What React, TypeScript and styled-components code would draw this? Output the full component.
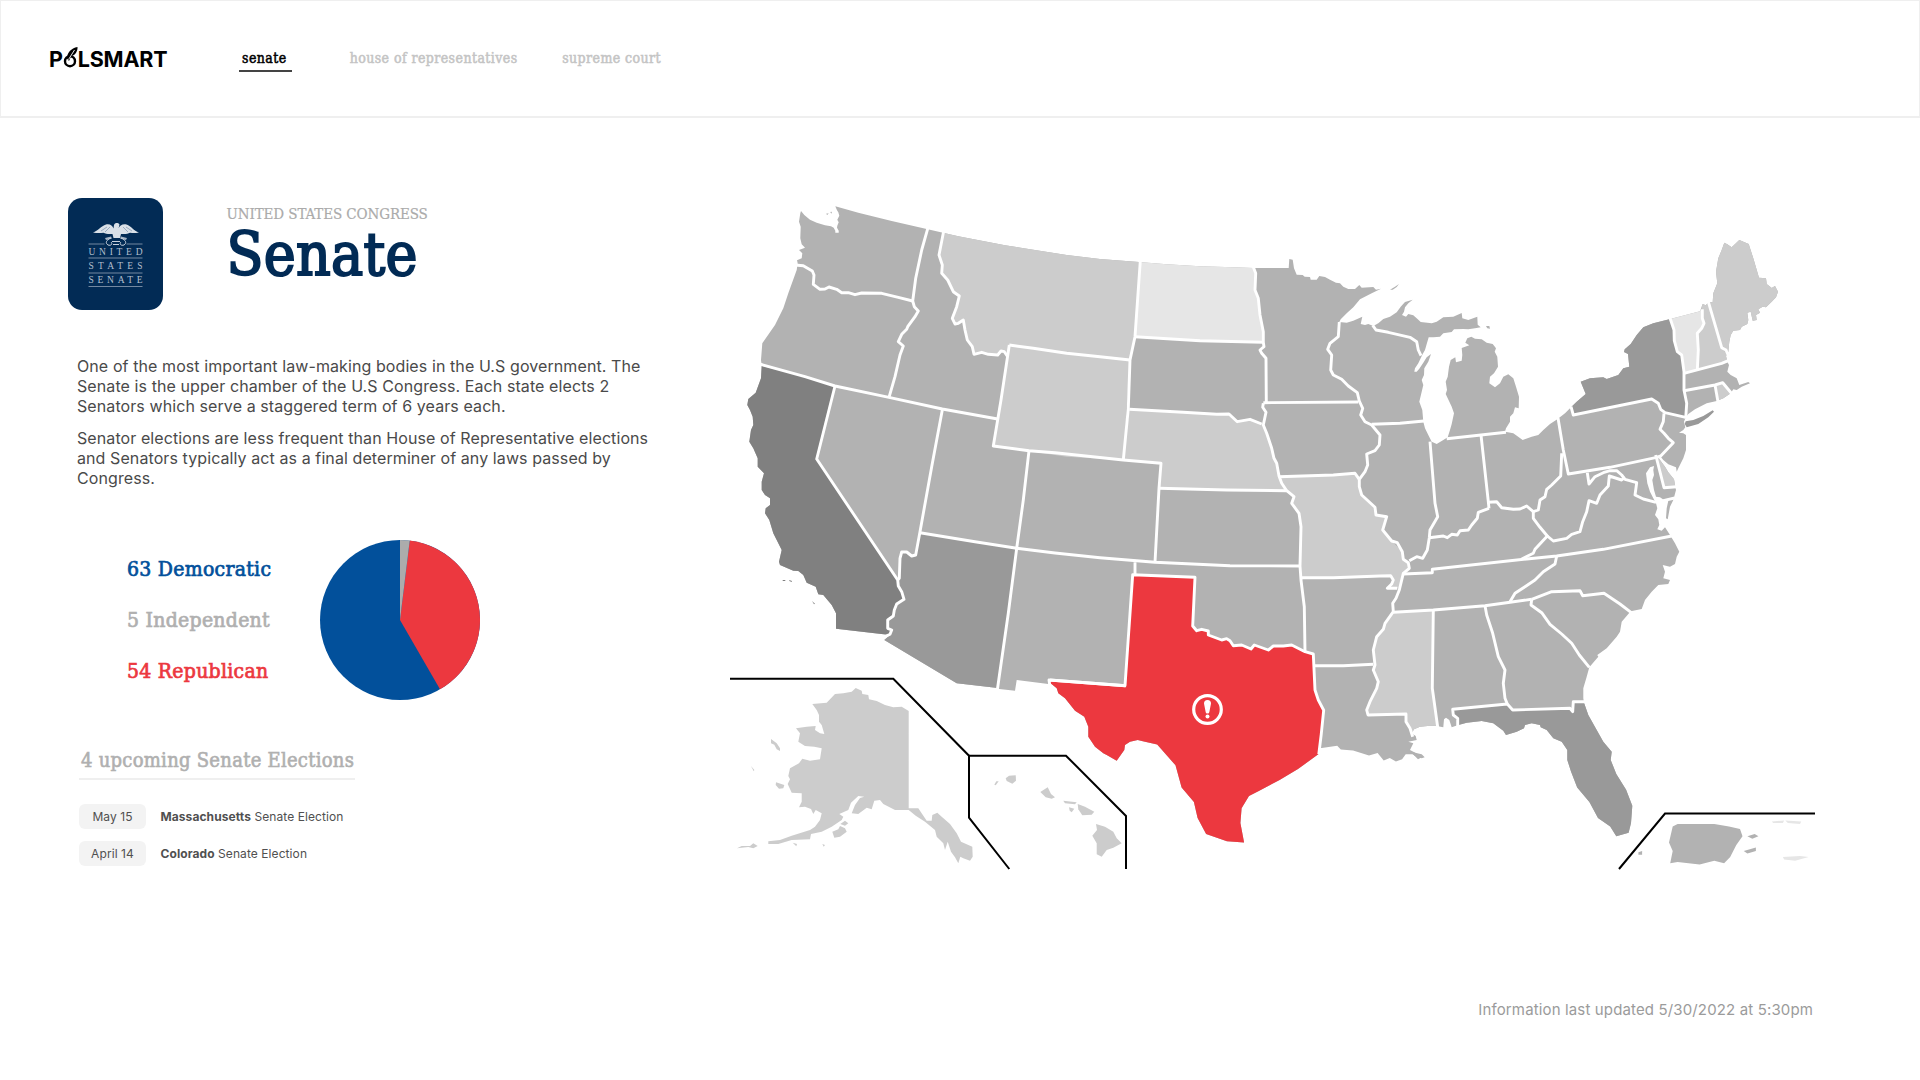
import React from "react";
import styled, { createGlobalStyle } from "styled-components";

const slab = `"Roboto Slab", "DejaVu Serif Condensed", "DejaVu Serif", serif`;
const sans = `Inter, "Liberation Sans", sans-serif`;

const GlobalStyle = createGlobalStyle`
  * { box-sizing: border-box; }
  body { margin: 0; background: #fff; font-family: ${sans}; }
`;

const Page = styled.div`
  width: 1920px;
  height: 1080px;
  overflow: hidden;
  display: flex;
  flex-direction: column;
  background: #fff;
`;

const Header = styled.header`
  height: 118px;
  flex: none;
  display: flex;
  align-items: center;
  padding-left: 48px;
  border: 1px solid #efefef;
  border-bottom-width: 2px;
`;

const Logo = styled.div`
  display: flex;
  align-items: center;
  width: 190px;
  font: 700 21.5px/26px ${sans};
  letter-spacing: -0.2px;
  color: #000;
`;

const Nav = styled.nav`
  display: flex;
  align-items: flex-start;
`;

const NavItem = styled.a<{ $active?: boolean; $gap: number }>`
  height: 28px;
  padding: 4px 5px 0 3px;
  margin: -1px ${(p) => p.$gap}px 0 0;
  border-bottom: 2px solid ${(p) => (p.$active ? "#444" : "transparent")};
  font: 500 14px/20px ${slab};
  letter-spacing: 0.43px;
  -webkit-text-stroke: 0.5px currentColor;
  color: ${(p) => (p.$active ? "#000" : "#c4c4c4")};
  white-space: nowrap;
`;

const Main = styled.main`
  display: flex;
  flex: none;
  height: 752px;
  padding-top: 80px;
`;

const Info = styled.section`
  width: 730px;
  flex: none;
  display: flex;
  flex-direction: column;

  & > * {
    flex: none;
  }
`;

const Intro = styled.div`
  display: flex;
  gap: 64px;
  padding-left: 67.5px;
  height: 156px;
`;

const Titles = styled.div`
  padding-top: 6px;
`;

const Eyebrow = styled.div`
  font: 400 15px/20px ${slab};
  letter-spacing: -0.1px;
  -webkit-text-stroke: 0.2px currentColor;
  color: #ababab;
  white-space: nowrap;
`;

const Title = styled.h1`
  margin: 0;
  font: 500 60px/61px ${slab};
  letter-spacing: 0.3px;
  -webkit-text-stroke: 2px currentColor;
  color: #022b55;
`;

const Copy = styled.div`
  padding: 2px 0 0 77px;
  height: 180px;
`;

const Paragraph = styled.p`
  margin: 0 0 12px;
  font: 400 16px/20px ${sans};
  letter-spacing: 0.09px;
  color: #4a4a4a;
  white-space: pre;
`;

const Split = styled.div`
  display: flex;
  align-items: center;
  height: 172px;
  padding-left: 127px;
`;

const Legend = styled.div`
  width: 193px;
  display: flex;
  flex-direction: column;
  gap: 23px;
`;

const LegendRow = styled.div<{ $color: string }>`
  font: 500 21px/28px ${slab};
  letter-spacing: 0.27px;
  -webkit-text-stroke: 0.7px currentColor;
  color: ${(p) => p.$color};
  white-space: nowrap;
`;

const Elections = styled.div`
  display: flex;
  flex-direction: column;
  padding: 40px 0 0 79px;
`;

const ElectionsTitle = styled.h2`
  width: 276px;
  height: 34px;
  margin: 0 0 23.5px;
  padding-left: 2px;
  border-bottom: 2px solid #efefef;
  font: 500 20px/28px ${slab};
  letter-spacing: 0.27px;
  -webkit-text-stroke: 0.6px currentColor;
  color: #b0b0b0;
  white-space: nowrap;
`;

const Election = styled.div`
  display: flex;
  align-items: center;
  gap: 14.5px;
  margin-bottom: 12px;
  font: 400 12px/25px ${sans};
  letter-spacing: 0.08px;
  color: #505050;
`;

const DatePill = styled.span`
  width: 67px;
  height: 25px;
  border-radius: 6px;
  background: #f3f3f3;
  text-align: center;
`;

const Updated = styled.footer`
  display: flex;
  justify-content: flex-end;
  padding: 130px 107px 0 0;
  font: 400 15px/20px ${sans};
  letter-spacing: 0.14px;
  color: #9b9b9b;
`;

/* Survey sheets: every sheet lists points in its own grid, measured from its corner. */
const sheet = (ox: number, oy: number, scale = 1 / 3) => (pts: string) =>
  pts
    .trim()
    .split(/\s+/)
    .map((p) => {
      const [x, y] = p.split(",").map(Number);
      return `${(ox + x * scale).toFixed(1)},${(oy + y * scale).toFixed(1)}`;
    })
    .join(" ");

const NW = sheet(725, 195);
const NC = sheet(1000, 195);
const GL = sheet(1300, 220);
const NE = sheet(1540, 220);
const SW = sheet(725, 400);
const MID = sheet(1050, 400);
const SE = sheet(1370, 440);
const AKH = sheet(725, 670);
const WIDE = sheet(0, 0, 1.2245);

const mainland = [
  NW("228,48 238,60 255,74 275,83 300,91 318,94 326,98 331,107 331,113 341,113 341,107 336,98 337,92 341,82 337,74 343,62 340,52 336,46 331,34 400,53 500,78 608,103 700,124 840,151"),
  NC("100,164 200,180 300,192 417,201 500,208 600,214 700,217 760,219 866,219 868,192 878,194 882,220 890,239 908,240 914,245 930,246 932,254 950,254 958,243 975,246 990,254"),
  GL("108,188 120,190 130,200 145,207 165,207 178,195 185,203 220,201 228,209 243,206 215,220 180,238 160,262 140,280 122,298 118,306 140,308 160,302 187,290 182,312 195,315 205,312 220,318 235,310 250,297 270,290 290,277 302,260 315,246 338,239 325,250 315,262 312,275 306,285 318,290 325,282 340,286 350,295 362,306 395,310 410,305 430,292 460,290 485,279 487,295 505,300 532,290 533,314 542,322 525,325 505,328 490,327 462,328 455,336 430,340 420,350 400,352 386,352 380,372 375,390 368,402 355,430 345,445 343,455 350,455 358,446 370,428 380,412 393,402 385,425 373,445 372,465 365,480 370,495 365,515 358,545 367,570 370,605 375,625 385,645 395,665 410,672 430,660 443,652 450,630 455,612 462,580 455,560 437,522 441,510 437,485 443,470 447,440 452,420 466,412 468,427 485,422 487,405 485,384 508,376 496,368 502,355 514,350 525,356 545,358 560,368 578,372 588,385 584,395 592,410 594,440 582,460 570,470 568,490 585,502 600,490 610,470 625,463 640,475 648,500 657,530 656,565 645,562 640,580 630,590 630,605 618,625 615,635 640,640 668,660 695,650 715,645 730,630 750,612"),
  NE("52,598 75,580 93,562 110,545 137,522 122,485 150,475 190,472 200,477 235,465 250,445 268,440 264,402 252,396 254,388 272,372 290,345 310,322 340,310 388,298 480,274 488,252 497,256 505,248 518,246 520,220 532,190 528,155 535,115 545,90 553,68 562,73 575,82 598,60 626,72 640,115 657,173 678,175 680,192 695,204 705,198 714,215 708,232 695,245 678,262 668,260 655,268 660,278 648,285 650,300 638,302 632,275 622,278 625,300 622,312 605,320 600,330 580,332 572,345 568,365 565,395 558,408 562,425 567,435 562,455 572,465 590,475 598,495 625,486 630,490 605,500 590,510 580,508 572,520 550,535 530,543 500,550 465,568 445,582 437,592 432,605 436,622 430,630 417,638 430,640 438,645"),
  SE("948,30 940,55 925,85 920,95 918,82 895,73 880,60 872,50 866,55 885,80 895,97 912,118 916,140 918,150 910,180 900,200 893,238 888,235 890,205 895,182 882,180 870,172 858,170 852,150 847,120 852,105 850,90 852,78 840,82 828,100 832,130 840,155 850,175 858,190 862,205 855,225 865,238 868,255 862,268 875,272 885,262 900,285 915,310 928,335 920,350 915,372 900,380 878,375 885,395 880,415 900,420 895,432 865,435 845,455 825,480 815,507 782,514 755,545 750,575 740,590 710,625 682,645 685,650 658,682 650,710 640,745 640,775 642,788 655,825 680,870 700,905 725,935 722,960"),
  WIDE("1320,632 1328,645 1333,658 1332,672 1330,680 1320,683 1315,675 1305,668 1298,655 1288,643 1283,630"),
  SE("592,960 592,930 575,905 550,895 530,870 512,862 510,855 485,850 465,855 462,865 440,875 408,885 400,872 370,850 335,843 290,848 265,855 245,862 238,840 228,833 222,838 220,862 200,858 180,857 150,860 132,868 125,880 137,888 140,900 115,905 130,910 120,930"),
  WIDE("1162,618 1158,620 1154,616 1148,616 1145,620 1140,622 1135,619 1130,621 1125,615 1118,617 1105,613 1095,612 1092,609 1078,611 1078,615 1060,628 1045,637 1028,646 1020,650 1014,660 1013,672 1016,688 1002,687 985,681 978,668 975,655 965,643 960,625 945,608"),
  AKH("1260,215 1238,210 1215,215 1200,225 1198,240 1175,272 1145,255 1135,250 1110,230 1090,200 1090,170 1078,140 1050,122 1020,85 1000,70 995,55 975,38 970,42 875,30 870,62 823,57 812,53 695,40"),
  SW("478,720 495,705 333,686 333,640 320,615 295,585 280,583 272,560 245,548 235,525 220,513 205,512 165,495 162,485 170,450 155,420 145,400 133,360 120,340 122,325 135,315 135,295 120,285 110,270 110,245 117,220 98,200 98,175 85,145 73,125 78,90 85,75 83,50 75,30 67,15"),
  NW("70,612 92,593 108,550 110,513 108,495 112,445 150,390 175,340 190,295 215,225 218,205 216,196 230,190 232,175 222,165 240,158 230,148 226,130 227,95 222,80 226,55"),
].join(" ");

const mt = [
  NW("655,112 642,180 652,210 650,235 668,255 685,290 703,303 695,335 682,370 690,387 700,385 715,375 720,405 727,435 742,455 747,478 770,472 790,478 818,480 828,468 838,470 848,485 853,450"),
  NC("100,460 200,475 300,485 390,495 405,425 420,190 300,170 0,130"),
  NW("700,90"),
].join(" ");

const shades: { fill: string; points: string }[] = [
  { fill: "#ccc", points: mt },
  { fill: "#ccc", points: NC("28,450 100,460 200,475 300,485 390,495 370,795 200,785 -20,753") },
  { fill: "#e6e6e6", points: NC("420,190 760,200 767,235 765,285 775,310 780,360 790,410 790,442 600,437 405,425") },
  { fill: "#ccc", points: MID("238,28 400,37 500,43 537,42 562,65 600,58 635,72 650,100 665,145 672,175 680,190 687,228 695,250 710,272 530,270 327,265 333,190 220,180") },
  { fill: "#ccc", points: MID("687,230 850,225 915,220 928,238 928,260 935,285 975,322 978,345 1010,350 998,390 1025,423 1057,455 1060,478 1075,488 1078,505 1060,522 1048,565 1012,565 1030,540 1022,528 850,533 753,533 753,380 747,340 725,310 732,290 710,272 695,250") },
  { fill: "#ccc", points: SE("70,517 190,510 187,745 203,870 130,880 120,865 108,845 108,822 -6,825 -10,810 0,785 20,745 25,725 10,690 15,675 10,630 20,590 40,568 45,550") },
  { fill: "#808080", points: [NW("80,505 240,545 330,573"), SW("275,177 518,540 520,558 530,575 537,598 515,612 508,630 505,648 488,660 488,685 500,690 495,705 320,700 20,500 20,0")].join(" ") },
  { fill: "#999", points: SW("585,398 750,425 875,445 850,640 818,880 690,870 465,725 495,703 500,690 488,685 488,660 505,648 508,630 515,612 537,598 530,575 520,558 523,535 525,475 530,456 545,456 560,468 572,465") },
  { fill: "#999", points: SE("248,808 412,792 428,810 600,805 608,815 610,785 642,785 820,930 820,1200 500,1200 550,960 400,920 263,880 263,835 250,825") },
  { fill: "#999", points: NE("93,565 100,585 335,537 355,550 362,568 375,578 437,592 440,550 432,510 432,455 425,405 412,395 403,362 402,330 390,290 300,290 100,450") },
  { fill: "#e6e6e6", points: NE("390,290 480,265 488,275 487,295 492,310 485,325 472,340 475,390 472,450 432,460 425,405 412,395 403,362 402,330") },
  { fill: "#ccc", points: NE("480,240 505,245 545,383 562,402 562,422 545,430 472,450 475,390 472,340 485,325 492,310 487,295 485,270") },
  { fill: "#ccc", points: NE("505,240 530,40 740,40 740,300 575,402 562,402 545,383") },
  { fill: "#ccc", points: NE("525,495 548,488 575,520 533,555") },
  { fill: "#ccc", points: SE("860,52 870,50 930,140 882,143") },
  {
    fill: "#ec383f",
    points: [
      MID("248,524 435,532 428,678 440,692 455,688 475,693 475,705 515,720 530,716 540,722 550,737 575,735 603,747 613,735 655,750 670,738 700,738 725,735 765,755 790,762 795,870 805,900"),
      WIDE("1081,580 1079,600 1077,612 1077,700 980,700 857,600"),
      AKH("974,32 1203,47"),
    ].join(" "),
  },
];

const borders: string[] = [
  NW("210,210 235,212 245,218 262,228 267,240 265,268 285,283 300,282 312,276 335,283 350,293 370,293 390,299 410,294 470,295 520,307 563,318"),
  NW("609,98 590,165 572,250 563,318 568,335 580,348 570,365 548,395 545,403 530,418 520,440 535,453 525,480 510,545 492,607"),
  NW("104,507 240,545 330,573 492,607 652,642 818,672"),
  [NW("330,573"), SW("275,177 518,540 520,558 530,575 537,598 515,612 508,630 505,648 488,660 488,685 500,690 495,703 476,712")].join(" "),
  SW("652,30 620,200 585,395 572,465 560,468 545,456 530,456 525,475 523,535 518,540"),
  [SW("585,398 750,425 875,445 990,459"), MID("150,473 315,487 540,497 750,498")].join(" "),
  [NC("28,450"), SW("828,0 805,138 912,152 990,158"), MID("220,180 333,190 327,265 315,487")].join(" "),
  NC("28,450 100,460 200,475 300,485 390,495"),
  SW("912,152 895,300 875,445 850,640 817,870"),
  NW("656,108 642,180 652,210 650,235 668,255 685,290 703,303 695,335 682,370 690,387 700,385 715,375 720,405 727,435 742,455 747,478 770,472 790,478 818,480 828,468 838,470 848,485"),
  [NC("421,198 405,425 390,495 385,640"), MID("220,180")].join(" "),
  NC("405,425 600,437 790,442"),
  NC("760,216 767,235 765,285 775,310 780,360 790,410 790,442 792,455 780,465 785,475 798,490 799,622"),
  MID("238,28 400,37 500,43 537,42 562,65 600,58 635,72"),
  MID("640,8 925,6"),
  MID("640,10 638,22 648,37 640,75 650,100 665,145 672,175 680,190 687,228 695,250 710,272 732,290 725,310 747,340 753,380 750,498 753,540 763,620 765,755"),
  MID("327,265 530,270 710,272"),
  MID("687,230 850,225 915,220 928,238"),
  MID("255,487 255,522"),
  [MID("0,840 225,857 248,524 435,532 428,678 440,692 455,688 475,693 475,705 515,720 530,716 540,722 550,737 575,735 603,747 613,735 655,750 670,738 700,738 725,735 765,755 790,762 795,870 805,900"), WIDE("1081,580 1079,600 1077,616")].join(" "),
  AKH("1203,47 972,30 974,44"),
  [MID("753,533 850,533 990,528"), SE("62,407 70,420 65,432 52,445 82,445")].join(" "),
  MID("795,797 880,797 970,793"),
  [GL("118,306 115,350 90,370 83,388 95,405 92,450 100,465 125,478 145,498 172,518 178,543 188,565 182,585 195,605 215,615"), MID("990,105 988,135 975,152 950,162 953,195 945,215 928,238 928,260 935,285 975,322 978,345"), SE("50,230 38,270 65,303 82,308 97,335 100,358 115,368 118,385 100,400 88,450 78,475 68,490 70,515 45,550 40,568 20,590 10,630 15,675 10,690 25,725 20,745 0,785 -10,810 -6,825 108,822 108,845 120,865 128,890")].join(" "),
  SE("70,517 190,510 345,497 420,487 485,478"),
  SE("100,402 187,398 187,388 470,357 560,348 700,328 905,288"),
  SE("190,513 187,745 203,862"),
  SE("345,497 350,525 368,580 385,650 405,690 400,730 405,775 412,792"),
  SE("263,860 263,835 250,825 248,808 412,792 428,810 600,805 608,815 610,785 645,785"),
  SE("485,478 483,495 515,518 540,553 575,582 605,610 628,645 658,682"),
  SE("485,478 545,455 630,452 638,467 702,460 750,492 784,518"),
  SE("560,348 555,372 520,395 495,420 465,440 435,460 420,485"),
  [GL("390,665"), SE("195,190 203,230 180,270 178,293 172,330 158,355 140,350 118,362")].join(" "),
  SE("178,293 220,288 232,293 245,283 262,285 270,272 295,270 305,255 322,235 325,217 357,205"),
  [GL("543,645"), SE("355,185 357,205")].join(" "),
  GL("440,656 543,645 618,637"),
  GL("215,613 300,610 372,603"),
  GL("218,316 228,330 265,337 330,352 350,365 355,390 363,407"),
  SE("355,187 380,185 395,203 430,208 450,207 470,198 490,215 505,210 510,180 525,170 530,148 545,135 572,108 575,40"),
  [NE("54,594 70,690"), SE("595,102 720,82 860,52")].join(" "),
  SE("490,215 490,235 510,262 532,288 495,328 490,340 455,357"),
  SE("532,288 550,303 590,295 605,283 630,275 638,245 650,215 657,182 680,190 690,165 715,138 718,108 755,120 765,112"),
  SE("652,98 657,132 675,110 700,98 720,92 740,92 755,105 765,118 800,128 795,165 820,177 858,187"),
  SE("857,45 882,143 920,140"),
  SE("880,182 914,174"),
  NE("350,712 362,708 400,668 385,655 372,640 360,628 370,605 372,580"),
  NE("93,560 100,585 335,537 355,550 362,568 375,578 437,592"),
  NE("390,294 402,330 403,362 412,395 425,405 432,455 432,510 440,550 437,595"),
  NE("487,268 487,295 492,310 485,325 472,340 475,390 472,450"),
  NE("432,460 545,430 565,422"),
  NE("505,245 545,383 558,390 564,404"),
  NE("432,512 525,495 548,488 578,524"),
  NE("525,495 534,546"),
];

const islands: { fill: string; points: string }[] = [
  { fill: "#999", points: NE("437,604 460,600 490,588 518,571 522,575 505,592 475,612 440,622 434,612") },
  { fill: "#b2b2b2", points: GL("270,209 285,200 297,192 290,201 278,209") },
  { fill: "#b2b2b2", points: GL("558,318 568,318 570,326 562,325") },
  { fill: "#808080", points: SW("173,540 181,540 181,543 173,543") },
  { fill: "#808080", points: SW("193,540 201,543 200,546 193,543") },
  { fill: "#808080", points: SW("261,603 270,611 267,613") },
  { fill: "#b2b2b2", points: SE("115,932 135,938 155,943 164,952 155,955 135,948") },
  { fill: "#b2b2b2", points: NW("303,56 311,55 307,60") },
  { fill: "#b2b2b2", points: NW("315,51 320,50 321,56") },
];

const alaskaHawaii: string[] = [
  AKH("551,123 530,110 505,112 480,105 455,93 432,88 430,75 412,72 410,62 392,54 380,65 355,70 330,72 315,88 305,98 262,102 275,120 282,135 282,155 290,165 298,192 285,190 270,180 272,168 245,170 213,175 225,190 220,215 240,228 268,230 290,235 285,268 255,272 232,266 222,280 195,295 190,318 195,328 188,342 200,368 230,370 230,395 222,412 240,410 258,417 265,432 272,420 290,430 285,450 270,470 255,480 200,497 165,510 130,514 130,522 160,522 200,510 255,508 258,492 290,485 320,470 350,450 355,440 343,432 370,420 378,398 400,378 418,380 405,384 390,405 380,430 400,432 425,413 440,418 448,392 465,390 475,402 510,420 551,420 572,437 600,455 630,480 635,500 655,520 660,540 668,515 678,545 690,562 700,580 706,560 715,565 735,572 743,560 742,530 708,515 695,490 675,462 650,440 637,428 622,435 620,452 605,452 580,415 551,415"),
  AKH("322,485 340,478 345,468 360,475 365,485 345,500 328,503"),
  AKH("346,462 360,452 370,460 360,467"),
  AKH("36,535 50,528 75,528 85,520 98,528 85,535 70,531"),
  AKH("138,207 155,220 165,235 165,243 155,238 148,224 138,220"),
  AKH("78,288 88,300 86,304"),
  AKH("153,337 178,345 175,355 162,356 152,345"),
  AKH("292,522 300,525 296,530"),
  AKH("203,518 216,522 214,529"),
  AKH("842,325 852,317 872,316 873,332 862,341 845,333"),
  AKH("808,344 814,334 821,334 812,346"),
  AKH("946,366 968,352 978,372 990,382 980,386 962,382"),
  AKH("1015,392 1055,397 1050,403 1020,400"),
  AKH("1032,412 1048,416 1040,427 1034,422"),
  AKH("1058,402 1080,410 1108,425 1100,434 1072,436 1060,418"),
  AKH("1113,462 1140,470 1165,485 1175,505 1190,520 1165,533 1145,540 1130,560 1115,553 1115,520 1102,497 1116,480"),
];

const puertoRico: { fill: string; points: string }[] = [
  { fill: "#b2b2b2", points: WIDE("1366,675 1370,673 1400,673 1412,675 1421,677 1423,683 1418,690 1413,700 1408,705 1400,703 1388,706 1370,704 1364,705 1366,695 1363,688") },
  { fill: "#b2b2b2", points: WIDE("1424,695 1434,692 1434,695 1427,697") },
  { fill: "#b2b2b2", points: WIDE("1427,683 1433,681 1436,683 1431,685") },
  { fill: "#b2b2b2", points: WIDE("1338,696 1341,695 1341,698 1338,698") },
  { fill: "#e6e6e6", points: WIDE("1447,671 1457,670 1456,672 1448,672") },
  { fill: "#e6e6e6", points: WIDE("1458,670 1471,671 1470,673 1460,672") },
  { fill: "#e6e6e6", points: WIDE("1456,700 1470,699 1477,700 1466,703 1457,702") },
];

const UsMap = () => (
  <svg width="1100" height="672" viewBox="730 198 1100 672" role="img" aria-label="Senate races by state">
    <defs>
      <clipPath id="land">
        <polygon points={mainland} />
      </clipPath>
    </defs>
    <polygon points={mainland} fill="#b2b2b2" />
    <g clipPath="url(#land)">
      {shades.map((s, i) => (
        <polygon key={i} points={s.points} fill={s.fill} />
      ))}
    </g>
    <g fill="none" stroke="#fff" strokeWidth="2.9" strokeLinejoin="round">
      {borders.map((b, i) => (
        <polyline key={i} points={b} />
      ))}
    </g>
    {islands.map((s, i) => (
      <polygon key={i} points={s.points} fill={s.fill} />
    ))}
    {alaskaHawaii.map((p, i) => (
      <polygon key={i} points={p} fill="#ccc" />
    ))}
    {puertoRico.map((s, i) => (
      <polygon key={i} points={s.points} fill={s.fill} />
    ))}
    <g fill="none" stroke="#000" strokeWidth="2">
      <polyline points={AKH("15,26 505,26 732,257 732,443 853,597")} />
      <polyline points={AKH("732,257 1023,257 1203,438 1203,597")} />
      <polyline points="1619,869 1665,813.5 1815,813.5" />
    </g>
    <circle cx="1207.5" cy="709.5" r="13.8" fill="none" stroke="#fff" strokeWidth="3.2" />
    <path d="M1204 703.5a3.5 3.5 0 0 1 7 0l-1.6 8.2a1.9 1.9 0 0 1-3.8 0z" fill="#fff" />
    <circle cx="1207.5" cy="716.6" r="2" fill="#fff" />
  </svg>
);

const SenateBadge = () => (
  <svg width="95" height="112" viewBox="0 0 95 112" role="img" aria-label="United States Senate">
    <rect width="95" height="112" rx="14" fill="#022b55" />
    <g fill="#d9e0e8">
      <path d="M25 34.500C30 33 33 28 38 26.500c4-.8 6.500 1 7.500 4L46 27c1-2.500 4-2.500 5.500-.5L50.500 30.500c1-3 4-4.800 8-4 5 1.500 7 6.500 12.500 8-4 .8-6 .5-9 .3-2 1.200-5 1.500-9 1.200l-1 4h-6.500l-1-4c-4 .3-7 0-9-1.200-3 .2-6.500.5-10.500-.3z" />
      <path d="M37 40l6-1.500 1 2-6 1.500zM59 40l-6-1.500-1 2 6 1.500z" opacity=".75" />
    </g>
    <path d="M33 33l6-4M37 34l5-5M64 33l-6-4M60 34l-5-5" stroke="#6f86a3" strokeWidth=".6" />
    <path d="M43 40c-5 2-6 5-3 7 3 1 5-1 3-3M53 40c5 2 6 5 3 7-3 1-5-1-3-3M44 43.500h8M45 46.500h6" fill="none" stroke="#c9d2dd" />
    <path d="M20.500 46h16M58.500 46h16M20.500 60h54M20.500 75h54M20.500 88.500h54" stroke="#7388a1" strokeWidth="1" />
    <g fill="#b3bfcd" fontFamily="'Liberation Serif', serif" fontSize="9.500">
      <text x="20.500" y="56.500" textLength="54">UNITED</text>
      <text x="20.500" y="71" textLength="54">STATES</text>
      <text x="20.500" y="85" textLength="54">SENATE</text>
    </g>
  </svg>
);

const MarkSvg = styled.svg`
  margin-top: -4px;
`;

const LogoMark = () => (
  <MarkSvg width="15" height="24" viewBox="0 0 15 24">
    <circle cx="7" cy="16.200" r="5" fill="none" stroke="#000" strokeWidth="2.400" />
    <path d="M4 13.500C4 8 8 3 14.500 2c.3 4-2 8-6.500 9.500L6 16z" fill="#000" />
    <path d="M5.500 14.500 11.500 5" stroke="#fff" strokeWidth=".9" />
  </MarkSvg>
);

const Pie = () => {
  const at = (deg: number) => {
    const a = ((deg - 90) * Math.PI) / 180;
    return `${80 + 80 * Math.cos(a)} ${80 + 80 * Math.sin(a)}`;
  };
  return (
    <svg width="160" height="160" viewBox="0 0 160 160" role="img" aria-label="Seats by party">
      <circle cx="80" cy="80" r="80" fill="#02509b" />
      <path d={`M80 80L${at(7)}A80 80 0 0 1 ${at(150)}Z`} fill="#ec383f" />
      <path d={`M80 80L${at(0)}A80 80 0 0 1 ${at(7)}Z`} fill="#acacac" />
    </svg>
  );
};

export default function App() {
  return (
    <Page>
      <GlobalStyle />
      <Header>
        <Logo>
          <span>P</span>
          <LogoMark />
          <span>LSMART</span>
        </Logo>
        <Nav>
          <NavItem $active $gap={55}>senate</NavItem>
          <NavItem $gap={36.5}>house of representatives</NavItem>
          <NavItem $gap={0}>supreme court</NavItem>
        </Nav>
      </Header>
      <Main>
        <Info>
          <Intro>
            <SenateBadge />
            <Titles>
              <Eyebrow>UNITED STATES CONGRESS</Eyebrow>
              <Title>Senate</Title>
            </Titles>
          </Intro>
          <Copy>
            <Paragraph>{"One of the most important law-making bodies in the U.S government. The\nSenate is the upper chamber of the U.S Congress. Each state elects 2\nSenators which serve a staggered term of 6 years each."}</Paragraph>
            <Paragraph>{"Senator elections are less frequent than House of Representative elections\nand Senators typically act as a final determiner of any laws passed by\nCongress."}</Paragraph>
          </Copy>
          <Split>
            <Legend>
              <LegendRow $color="#02509b">63 Democratic</LegendRow>
              <LegendRow $color="#b0b0b0">5 Independent</LegendRow>
              <LegendRow $color="#ec383f">54 Republican</LegendRow>
            </Legend>
            <Pie />
          </Split>
          <Elections>
            <ElectionsTitle>4 upcoming Senate Elections</ElectionsTitle>
            <Election>
              <DatePill>May 15</DatePill>
              <span><b>Massachusetts</b> Senate Election</span>
            </Election>
            <Election>
              <DatePill>April 14</DatePill>
              <span><b>Colorado</b> Senate Election</span>
            </Election>
          </Elections>
        </Info>
        <UsMap />
      </Main>
      <Updated>Information last updated 5/30/2022 at 5:30pm</Updated>
    </Page>
  );
}
